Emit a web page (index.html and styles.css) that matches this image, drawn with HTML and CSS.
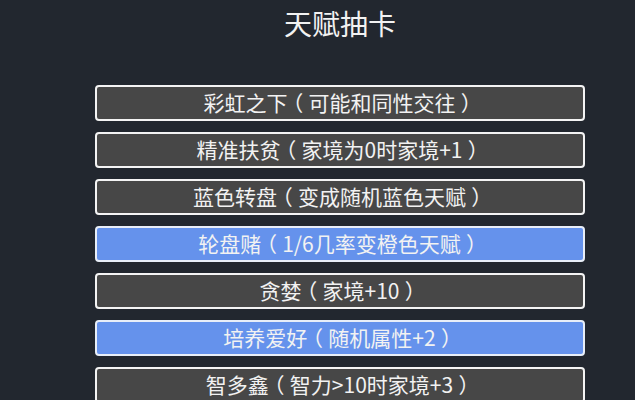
FILE: index.html
```html
<!DOCTYPE html>
<html lang="zh-CN">
<head>
<meta charset="utf-8">
<title>天赋抽卡</title>
<link rel="stylesheet" href="styles.css">
</head>
<body>
<main class="panel">
  <h1 class="title">天赋抽卡</h1>
  <ul class="talents">
    <li class="talent">彩虹之下<span class="paren">（</span>可能和同性交往<span class="paren">）</span></li>
    <li class="talent">精准扶贫<span class="paren">（</span>家境为0时家境+1<span class="paren">）</span></li>
    <li class="talent">蓝色转盘<span class="paren">（</span>变成随机蓝色天赋<span class="paren">）</span></li>
    <li class="talent is-picked">轮盘赌<span class="paren">（</span>1/6几率变橙色天赋<span class="paren">）</span></li>
    <li class="talent">贪婪<span class="paren">（</span>家境+10<span class="paren">）</span></li>
    <li class="talent is-picked">培养爱好<span class="paren">（</span>随机属性+2<span class="paren">）</span></li>
    <li class="talent">智多鑫<span class="paren">（</span>智力&gt;10时家境+3<span class="paren">）</span></li>
  </ul>
</main>
</body>
</html>
```
FILE: styles.css
```css
html, body {
  margin: 0;
  padding: 0;
  background: #22272f;
  height: 100%;
  overflow: hidden;
}

body {
  font-family: "Noto Sans CJK SC", "Noto Sans", sans-serif;
  color: #f2f2f2;
}

.panel {
  width: 490px;
  margin-left: 95px;
  display: flex;
  flex-direction: column;
}

.title {
  margin: 0;
  padding-top: 8px;
  font-size: 28px;
  line-height: 30px;
  font-weight: 400;
  text-align: center;
  height: 85px;
  box-sizing: border-box;
}

.talents {
  list-style: none;
  margin: 0;
  padding: 0;
  display: flex;
  flex-direction: column;
  gap: 11px;
}

.talent {
  height: 36px;
  box-sizing: border-box;
  border: 2px solid #f4f4f4;
  border-radius: 4px;
  background: #474747;
  display: flex;
  align-items: center;
  justify-content: center;
  font-size: 21px;
  line-height: 1;
  padding-bottom: 1px;
  color: #f2f2f2;
  white-space: pre;
}

/* full-width brackets drawn centred in their em box */
.paren {
  font-feature-settings: "halt";
  padding: 0 0.25em;
}

.talent.is-picked {
  background: #6592ec;
  border-color: #e8eef8;
}
```
